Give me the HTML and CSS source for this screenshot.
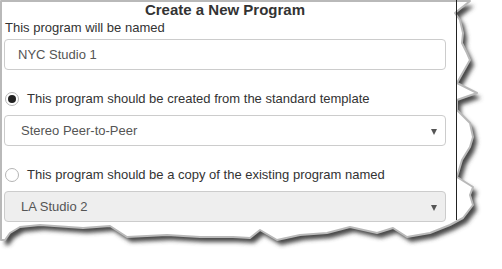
FILE: index.html
```html
<!DOCTYPE html>
<html>
<head>
<meta charset="utf-8">
<link rel="stylesheet" href="styles.css">
</head>
<body>
<div class="sheet">
  <svg class="paper" width="502" height="269" viewBox="0 0 502 269" aria-hidden="true">
    <defs>
      <filter id="blur" x="-10%" y="-10%" width="120%" height="120%">
        <feGaussianBlur stdDeviation="2"/>
      </filter>
    </defs>
    <path class="shadow" filter="url(#blur)" transform="translate(4 5)" d="M1 1 L470 1 L455 13 L460 20 L463 33 L462 43 L467 53 L470 60 L457 83 L477 93 L457 100 L457 110 L470 123 L473 137 L470 147 L462 160 L457 177 L473 187 L470 195 L473 205 L463 218 L450 225 L430 233 L407 237 L393 228 L377 233 L350 227 L327 233 L300 235 L277 240 L260 230 L250 238 L233 237 L200 237 L167 235 L127 237 L110 226 L83 228 L40 225 L20 227 L10 233 L5 240 L1 240 Z"/>
    <path class="edge" d="M1 1 L470 1 L455 13 L460 20 L463 33 L462 43 L467 53 L470 60 L457 83 L477 93 L457 100 L457 110 L470 123 L473 137 L470 147 L462 160 L457 177 L473 187 L470 195 L473 205 L463 218 L450 225 L430 233 L407 237 L393 228 L377 233 L350 227 L327 233 L300 235 L277 240 L260 230 L250 238 L233 237 L200 237 L167 235 L127 237 L110 226 L83 228 L40 225 L20 227 L10 233 L5 240 L1 240 Z"/>
    <line class="rule" x1="456.5" y1="0" x2="456.5" y2="220"/>
  </svg>
  <div class="dialog">
    <div class="title">Create a New Program</div>
    <div class="label">This program will be named</div>
    <div class="field">NYC Studio 1</div>
    <label class="radio-row">
      <span class="radio checked"></span>
      <span>This program should be created from the standard template</span>
    </label>
    <div class="select">
      <span>Stereo Peer-to-Peer</span>
      <span class="caret"></span>
    </div>
    <label class="radio-row">
      <span class="radio"></span>
      <span>This program should be a copy of the existing program named</span>
    </label>
    <div class="select disabled">
      <span>LA Studio 2</span>
      <span class="caret"></span>
    </div>
  </div>
</div>
</body>
</html>
```

FILE: styles.css
```css
html, body {
  margin: 0;
  padding: 0;
  background: #fff;
}

body {
  width: 502px;
  height: 269px;
  overflow: hidden;
  font-family: "Liberation Sans", Arial, sans-serif;
  color: #333;
}

.sheet {
  position: relative;
  width: 502px;
  height: 269px;
}

.paper {
  position: absolute;
  left: 0;
  top: 0;
  z-index: 0;
}

.shadow {
  fill: #4a4a4a;
}

.edge {
  fill: #fff;
  stroke: #b9b9b9;
  stroke-width: 2;
  stroke-linejoin: round;
}

.rule {
  stroke: #222;
  stroke-width: 1;
}

.dialog {
  position: relative;
  z-index: 1;
  width: 442px;
  padding: 2px 0 0 4px;
  display: flex;
  flex-direction: column;
}

.title {
  font-weight: bold;
  font-size: 15px;
  line-height: 16px;
  text-align: center;
}

.label {
  margin-top: 2px;
  font-size: 13px;
  line-height: 16px;
  padding-left: 1px;
}

.field,
.select {
  box-sizing: border-box;
  height: 31px;
  border: 1px solid #ccc;
  border-radius: 4px;
  font-size: 13px;
  color: #555;
  display: flex;
  align-items: center;
  background: #fff;
}

.field {
  margin-top: 3px;
  padding-left: 13px;
}

.select {
  margin-top: 8px;
  padding: 0 8px 0 16px;
  justify-content: space-between;
}

.select.disabled {
  background: #eee;
}

.caret {
  width: 0;
  height: 0;
  border-left: 3.5px solid transparent;
  border-right: 3.5px solid transparent;
  border-top: 6px solid #555;
  margin-top: 2px;
}

.radio-row {
  margin-top: 21px;
  display: flex;
  align-items: center;
  gap: 8px;
  font-size: 13px;
  line-height: 16px;
  padding-left: 1px;
}

.radio {
  box-sizing: border-box;
  width: 14px;
  height: 14px;
  border: 1px solid #b5b5b5;
  border-radius: 50%;
  background: #fff;
  display: flex;
  align-items: center;
  justify-content: center;
  flex: none;
}

.radio.checked::after {
  content: "";
  width: 8px;
  height: 8px;
  border-radius: 50%;
  background: #222;
}
```
